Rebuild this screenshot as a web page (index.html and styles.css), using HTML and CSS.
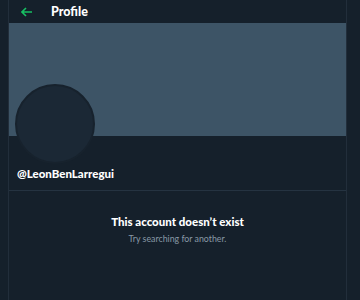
FILE: index.html
```html
<!DOCTYPE html>
<html>
<head>
<meta charset="utf-8">
<link rel="stylesheet" href="styles.css">
</head>
<body>
<div class="col">
  <header class="topbar">
    <svg class="back" width="11" height="10" viewBox="0 0 11 10"><path d="M5 1L1 5l4 4M1 5h10" fill="none" stroke="#17bf63" stroke-width="1.6"/></svg>
    <span class="title">Profile</span>
  </header>
  <div class="banner"></div>
  <div class="avatar"></div>
  <div class="handle">@LeonBenLarregui</div>
  <div class="empty">
    <div class="empty-title">This account doesn’t exist</div>
    <div class="empty-sub">Try searching for another.</div>
  </div>
</div>
</body>
</html>
```

FILE: styles.css
```css
html, body {
  margin: 0;
  padding: 0;
  background: #15202b;
  height: 300px;
  overflow: hidden;
}
body {
  font-family: Lato, "Open Sans", sans-serif;
  color: #ffffff;
}
.col {
  margin-left: 8px;
  width: 339px;
  height: 300px;
  box-sizing: border-box;
  border-left: 1px solid #222e3b;
  border-right: 1px solid #222e3b;
}
.topbar {
  height: 23px;
  display: flex;
  align-items: center;
  padding-left: 12px;
}
.back {
  display: block;
}
.title {
  margin-left: 19px;
  font-weight: 900;
  font-size: 12.5px;
}
.banner {
  height: 113px;
  background: #3d5466;
}
.avatar {
  width: 76px;
  height: 76px;
  border-radius: 50%;
  background: #1b2835;
  border: 2px solid #17222d;
  margin-top: -52px;
  margin-left: 6px;
}
.handle {
  font-weight: 900;
  font-size: 11.5px;
  padding-left: 8px;
  margin-top: 2px;
  height: 24px;
  line-height: 15px;
  border-bottom: 1px solid #253341;
}
.empty {
  text-align: center;
  padding-top: 23px;
}
.empty-title {
  font-weight: 900;
  font-size: 11.5px;
  line-height: 15px;
}
.empty-sub {
  font-size: 8.8px;
  color: #8899a6;
  margin-top: 4px;
}
```
